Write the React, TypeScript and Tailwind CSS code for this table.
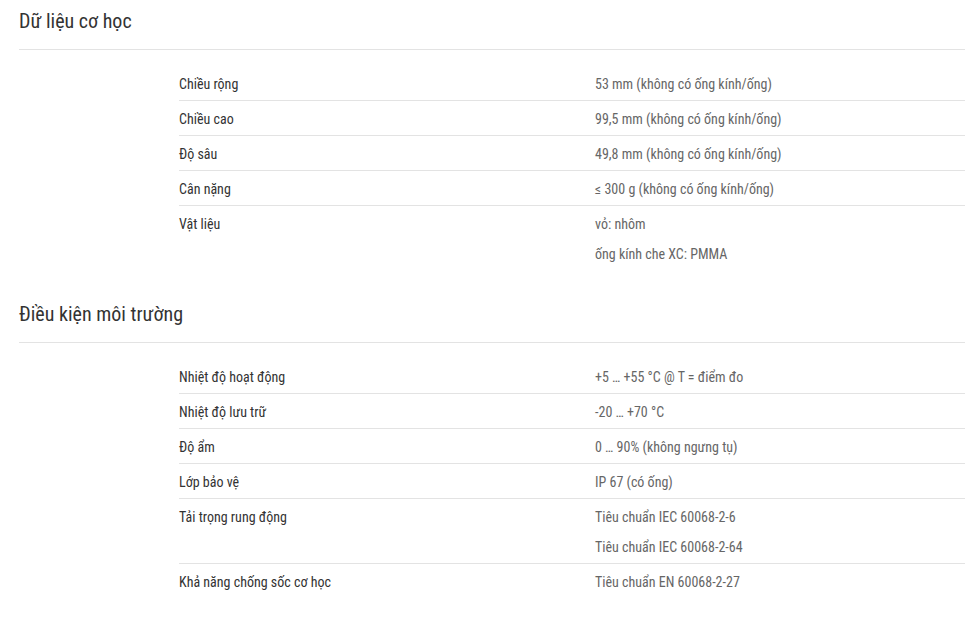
const sections = [
  {
    title: "Dữ liệu cơ học",
    rows: [
      { label: "Chiều rộng", values: ["53 mm (không có ống kính/ống)"] },
      { label: "Chiều cao", values: ["99,5 mm (không có ống kính/ống)"] },
      { label: "Độ sâu", values: ["49,8 mm (không có ống kính/ống)"] },
      { label: "Cân nặng", values: ["≤ 300 g (không có ống kính/ống)"] },
      { label: "Vật liệu", values: ["vỏ: nhôm", "ống kính che XC: PMMA"] },
    ],
  },
  {
    title: "Điều kiện môi trường",
    rows: [
      { label: "Nhiệt độ hoạt động", values: ["+5 … +55 °C @ T = điểm đo"] },
      { label: "Nhiệt độ lưu trữ", values: ["-20 … +70 °C"] },
      { label: "Độ ẩm", values: ["0 … 90% (không ngưng tụ)"] },
      { label: "Lớp bảo vệ", values: ["IP 67 (có ống)"] },
      {
        label: "Tải trọng rung động",
        values: ["Tiêu chuẩn IEC 60068-2-6", "Tiêu chuẩn IEC 60068-2-64"],
      },
      { label: "Khả năng chống sốc cơ học", values: ["Tiêu chuẩn EN 60068-2-27"] },
    ],
  },
];

export default function App() {
  return (
    <div
      className="min-h-[618px] w-full bg-white pl-[19px]"
      style={{ fontFamily: "'Roboto Condensed', Roboto, 'Noto Sans', sans-serif" }}
    >
      {sections.map((s) => (
        <section key={s.title} className="pb-[23px]">
          <h2 className="h-[50px] border-b border-[#e3e3e3] pt-[7px] text-[20px] leading-[28px] text-[#333]">
            {s.title}
          </h2>
          <div className="ml-[160px] mt-[16px]">
            {s.rows.map((r, i) => (
              <div
                key={r.label}
                className={
                  "grid grid-cols-[416px_1fr] pt-[8px] pb-[6px] text-[14px] leading-[20px] " +
                  (i < s.rows.length - 1 ? "border-b border-[#e3e3e3]" : "")
                }
              >
                <div className="text-[#333]">{r.label}</div>
                <div className="flex flex-col gap-[10px] text-[#666]">
                  {r.values.map((v) => (
                    <div key={v}>{v}</div>
                  ))}
                </div>
              </div>
            ))}
          </div>
        </section>
      ))}
    </div>
  );
}
